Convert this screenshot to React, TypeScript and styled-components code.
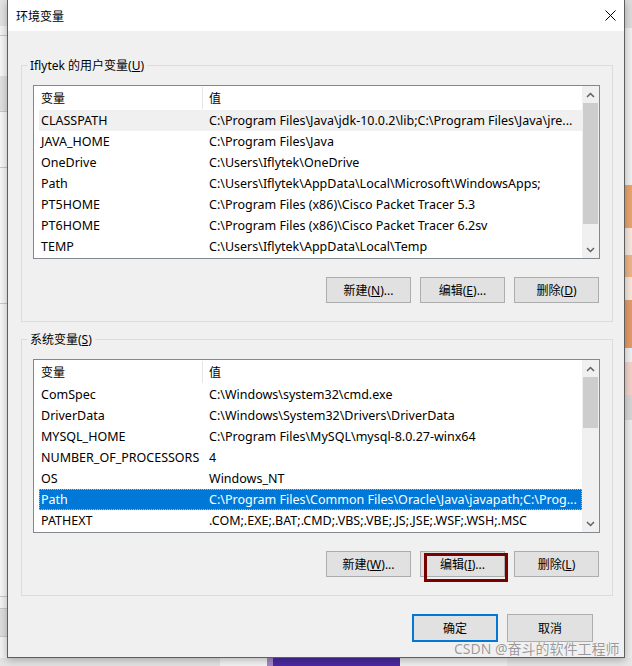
import React from "react";
import styled, { createGlobalStyle } from "styled-components";

const GlobalStyle = createGlobalStyle`
  html, body {
    margin: 0;
    padding: 0;
    background: #f0f0f0;
  }
  body {
    font-family: "Noto Sans", "Noto Sans CJK SC", sans-serif;
    font-size: 12px;
    color: #000;
  }
`;

const Screen = styled.div`
  position: relative;
  display: grid;
  grid-template-columns: 7px 618px 7px;
  grid-template-rows: 658px 8px;
  width: 632px;
  height: 666px;
  overflow: hidden;
  background: #f0f0f0;
`;

const LeftStrip = styled.div`
  display: flex;
  flex-direction: column;
  background: #f3f3f3;
`;

const StripBlock = styled.div<{ $h: number; $bg: string; $line?: boolean }>`
  flex: 0 0 ${(p) => p.$h}px;
  background: ${(p) => p.$bg};
  border-bottom: ${(p) => (p.$line ? "1px solid #c8c8c8" : "none")};
`;

const RightStrip = styled.div`
  display: flex;
  flex-direction: column;
  background: #f0f0f0;
`;

const BottomStrip = styled.div`
  grid-column: 1 / 4;
  display: flex;
  background: #f0f0f0;
`;

const BottomPiece = styled.div<{ $w: number; $bg: string }>`
  flex: 0 0 ${(p) => p.$w}px;
  background: ${(p) => p.$bg};
`;

const Dialog = styled.div`
  position: relative;
  z-index: 1;
  display: flex;
  flex-direction: column;
  box-sizing: border-box;
  background: #f0f0f0;
  border: 1px solid #5e5e5e;
  border-top: none;
  box-shadow: 0 2px 8px rgba(0, 0, 0, 0.28);
`;

const TitleBar = styled.div`
  display: flex;
  align-items: center;
  justify-content: space-between;
  height: 31px;
  padding-left: 8px;
  background: #fff;
`;

const Title = styled.span`
  font-family: "Noto Sans CJK SC", sans-serif;
  font-size: 12px;
  line-height: 16px;
`;

const CloseButton = styled.div`
  display: flex;
  align-items: center;
  justify-content: center;
  width: 28px;
  height: 31px;
`;

const Body = styled.div`
  display: flex;
  flex-direction: column;
  padding: 26px 11px 15px 13px;
`;

const Group = styled.fieldset<{ $gap?: number }>`
  min-width: 0;
  margin: ${(p) => p.$gap ?? 0}px 0 0 0;
  padding: 11px 12px 18px 11px;
  border: 1px solid #dcdcdc;
  border-radius: 0;
`;

const Legend = styled.legend`
  margin-left: -6px;
  padding: 0 3px;
  font-size: 12px;
  line-height: 17px;
`;

const ListBox = styled.div`
  display: flex;
  height: 174px;
  box-sizing: border-box;
  border: 1px solid #828790;
  background: #fff;
`;

const ListContent = styled.div`
  flex: 1;
  min-width: 0;
  overflow: hidden;
`;

const HeaderRow = styled.div`
  display: flex;
  height: 24px;
  align-items: stretch;
`;

const HeaderCell = styled.div<{ $first?: boolean }>`
  display: flex;
  align-items: center;
  box-sizing: border-box;
  flex: ${(p) => (p.$first ? "0 0 169px" : "1")};
  padding-left: ${(p) => (p.$first ? 7 : 6)}px;
  border-right: ${(p) => (p.$first ? "1px solid #e5e5e5" : "none")};
  margin: 1px 0 1px 0;
`;

const Row = styled.div<{ $state?: "selected" | "inactive" }>`
  display: flex;
  height: 21px;
  margin-left: 5px;
  box-sizing: border-box;
  align-items: center;
  white-space: nowrap;
  font-size: 12.5px;
  background: ${(p) =>
    p.$state === "selected" ? "#0078d7" : p.$state === "inactive" ? "#f0f0f0" : "transparent"};
  color: ${(p) => (p.$state === "selected" ? "#fff" : "#000")};
  outline: ${(p) => (p.$state === "selected" ? "1px dotted #f0b050" : "none")};
  outline-offset: -1px;
`;

const NameCell = styled.div`
  flex: 0 0 163px;
  box-sizing: border-box;
  padding-left: 2px;
  overflow: hidden;
`;

const ValueCell = styled.div`
  flex: 1;
  min-width: 0;
  padding-left: 7px;
  overflow: hidden;
`;

const ScrollBar = styled.div`
  flex: 0 0 17px;
  display: flex;
  flex-direction: column;
  background: #f0f0f0;
`;

const ScrollArrow = styled.div`
  flex: 0 0 17px;
  display: flex;
  align-items: center;
  justify-content: center;
`;

const ScrollTrack = styled.div`
  flex: 1;
`;

const Thumb = styled.div`
  margin: 0 1px;
  background: #cdcdcd;
`;

const ButtonRow = styled.div<{ $gap: number; $right: number; $top: number }>`
  display: flex;
  justify-content: flex-end;
  gap: ${(p) => p.$gap}px;
  margin-top: ${(p) => p.$top}px;
  padding-right: ${(p) => p.$right}px;
`;

const ButtonSlot = styled.div`
  position: relative;
  display: flex;
`;

const Button = styled.button<{ $primary?: boolean; $w: number; $h: number }>`
  width: ${(p) => p.$w}px;
  height: ${(p) => p.$h}px;
  padding: 0;
  box-sizing: border-box;
  font-family: "Noto Sans", "Noto Sans CJK SC", sans-serif;
  font-size: 12px;
  color: #000;
  background: #e1e1e1;
  border: ${(p) => (p.$primary ? "2px solid #0078d7" : "1px solid #adadad")};
  border-radius: 0;
`;

const Annotation = styled.div`
  position: absolute;
  left: 4px;
  top: 2px;
  width: 84px;
  height: 29px;
  box-sizing: border-box;
  border: 3px solid #7a0000;
  pointer-events: none;
`;

const Watermark = styled.div`
  position: absolute;
  z-index: 2;
  left: 454px;
  top: 640px;
  font-family: "Noto Sans", "Noto Sans CJK SC", sans-serif;
  font-size: 14px;
  line-height: 18px;
  color: rgba(120, 120, 120, 0.75);
  text-shadow: 0 0 1px #fff;
  white-space: nowrap;
`;

type Variable = { name: string; value: string };

const userVars: Variable[] = [
  { name: "CLASSPATH", value: String.raw`C:\Program Files\Java\jdk-10.0.2\lib;C:\Program Files\Java\jre...` },
  { name: "JAVA_HOME", value: String.raw`C:\Program Files\Java` },
  { name: "OneDrive", value: String.raw`C:\Users\Iflytek\OneDrive` },
  { name: "Path", value: String.raw`C:\Users\Iflytek\AppData\Local\Microsoft\WindowsApps;` },
  { name: "PT5HOME", value: String.raw`C:\Program Files (x86)\Cisco Packet Tracer 5.3` },
  { name: "PT6HOME", value: String.raw`C:\Program Files (x86)\Cisco Packet Tracer 6.2sv` },
  { name: "TEMP", value: String.raw`C:\Users\Iflytek\AppData\Local\Temp` },
];

const systemVars: Variable[] = [
  { name: "ComSpec", value: String.raw`C:\Windows\system32\cmd.exe` },
  { name: "DriverData", value: String.raw`C:\Windows\System32\Drivers\DriverData` },
  { name: "MYSQL_HOME", value: String.raw`C:\Program Files\MySQL\mysql-8.0.27-winx64` },
  { name: "NUMBER_OF_PROCESSORS", value: "4" },
  { name: "OS", value: "Windows_NT" },
  { name: "Path", value: String.raw`C:\Program Files\Common Files\Oracle\Java\javapath;C:\Prog...` },
  { name: "PATHEXT", value: ".COM;.EXE;.BAT;.CMD;.VBS;.VBE;.JS;.JSE;.WSF;.WSH;.MSC" },
];

function Chevron({ up }: { up?: boolean }) {
  return (
    <svg width="9" height="6" viewBox="0 0 9 6">
      <polyline
        points={up ? "1,5 4.5,1.5 8,5" : "1,1 4.5,4.5 8,1"}
        fill="none"
        stroke="#606060"
        strokeWidth="1.5"
      />
    </svg>
  );
}

function VarList({
  rows,
  thumbTop,
  thumbHeight,
  selected,
  inactive,
}: {
  rows: Variable[];
  thumbTop: number;
  thumbHeight: number;
  selected?: number;
  inactive?: number;
}) {
  return (
    <ListBox>
      <ListContent>
        <HeaderRow>
          <HeaderCell $first>变量</HeaderCell>
          <HeaderCell>值</HeaderCell>
        </HeaderRow>
        {rows.map((r, i) => (
          <Row
            key={r.name + i}
            $state={i === selected ? "selected" : i === inactive ? "inactive" : undefined}
          >
            <NameCell>{r.name}</NameCell>
            <ValueCell>{r.value}</ValueCell>
          </Row>
        ))}
      </ListContent>
      <ScrollBar>
        <ScrollArrow>
          <Chevron up />
        </ScrollArrow>
        <ScrollTrack>
          <Thumb style={{ marginTop: thumbTop, height: thumbHeight }} />
        </ScrollTrack>
        <ScrollArrow>
          <Chevron />
        </ScrollArrow>
      </ScrollBar>
    </ListBox>
  );
}

function Mn({ label, k, tail = "" }: { label: string; k: string; tail?: string }) {
  return (
    <>
      {label}(<u>{k}</u>){tail}
    </>
  );
}

export default function App() {
  return (
    <>
      <GlobalStyle />
      <Screen>
        <LeftStrip>
          <StripBlock $h={26} $bg="#e2e2e2" />
          <StripBlock $h={9} $bg="#f3f3f3" $line />
          <StripBlock $h={40} $bg="#f6f6f6" />
          <StripBlock $h={35} $bg="#e0e0e0" $line />
          <StripBlock $h={55} $bg="#f6f6f6" $line />
          <StripBlock $h={135} $bg="#f6f6f6" $line />
          <StripBlock $h={292} $bg="#f6f6f6" $line />
          <StripBlock $h={11} $bg="#f3f3f3" $line />
          <StripBlock $h={27} $bg="#dedede" $line />
          <StripBlock $h={20} $bg="#f3f3f3" />
        </LeftStrip>

        <Dialog>
          <TitleBar>
            <Title>环境变量</Title>
            <CloseButton>
              <svg width="11" height="11" viewBox="0 0 11 11">
                <path d="M0.5 0.5 L10.5 10.5 M10.5 0.5 L0.5 10.5" stroke="#000" strokeWidth="1" />
              </svg>
            </CloseButton>
          </TitleBar>
          <Body>
            <Group>
              <Legend>
                Iflytek 的用户变量(<u>U</u>)
              </Legend>
              <VarList rows={userVars} thumbTop={0} thumbHeight={121} inactive={0} />
              <ButtonRow $gap={9} $right={1} $top={18}>
                <Button $w={85} $h={26}>
                  <Mn label="新建" k="N" tail="..." />
                </Button>
                <Button $w={85} $h={26}>
                  <Mn label="编辑" k="E" tail="..." />
                </Button>
                <Button $w={85} $h={26}>
                  <Mn label="删除" k="D" />
                </Button>
              </ButtonRow>
            </Group>

            <Group $gap={9}>
              <Legend>
                系统变量(<u>S</u>)
              </Legend>
              <VarList rows={systemVars} thumbTop={0} thumbHeight={51} selected={5} />
              <ButtonRow $gap={9} $right={1} $top={18}>
                <Button $w={85} $h={26}>
                  <Mn label="新建" k="W" tail="..." />
                </Button>
                <ButtonSlot>
                  <Button $w={85} $h={26}>
                    <Mn label="编辑" k="I" tail="..." />
                  </Button>
                  <Annotation />
                </ButtonSlot>
                <Button $w={85} $h={26}>
                  <Mn label="删除" k="L" />
                </Button>
              </ButtonRow>
            </Group>

            <ButtonRow $gap={9} $right={20} $top={18}>
              <Button $primary $w={86} $h={28}>
                确定
              </Button>
              <Button $w={86} $h={28}>
                取消
              </Button>
            </ButtonRow>
          </Body>
        </Dialog>

        <RightStrip>
          <StripBlock $h={28} $bg="#dcdcdc" />
          <StripBlock $h={157} $bg="#f0f0f0" />
          <StripBlock $h={43} $bg="#e9a56c" />
          <StripBlock $h={27} $bg="#f6e8de" />
          <StripBlock $h={22} $bg="#eeb485" />
          <StripBlock $h={23} $bg="#f6e8de" />
          <StripBlock $h={48} $bg="#e59a68" />
          <StripBlock $h={14} $bg="#f0f0f0" />
          <StripBlock $h={33} $bg="#f2d3ca" />
          <StripBlock $h={25} $bg="#d6d6d6" />
          <StripBlock $h={238} $bg="#ececec" />
        </RightStrip>

        <BottomStrip>
          <BottomPiece $w={220} $bg="#e4e4e4" />
          <BottomPiece $w={47} $bg="#f4f4f4" />
          <BottomPiece $w={6} $bg="#a585c8" />
          <BottomPiece $w={127} $bg="#4b2a9e" />
          <BottomPiece $w={107} $bg="#f0f0f0" />
          <BottomPiece $w={125} $bg="#e6e6e6" />
        </BottomStrip>

        <Watermark>CSDN @奋斗的软件工程师</Watermark>
      </Screen>
    </>
  );
}
